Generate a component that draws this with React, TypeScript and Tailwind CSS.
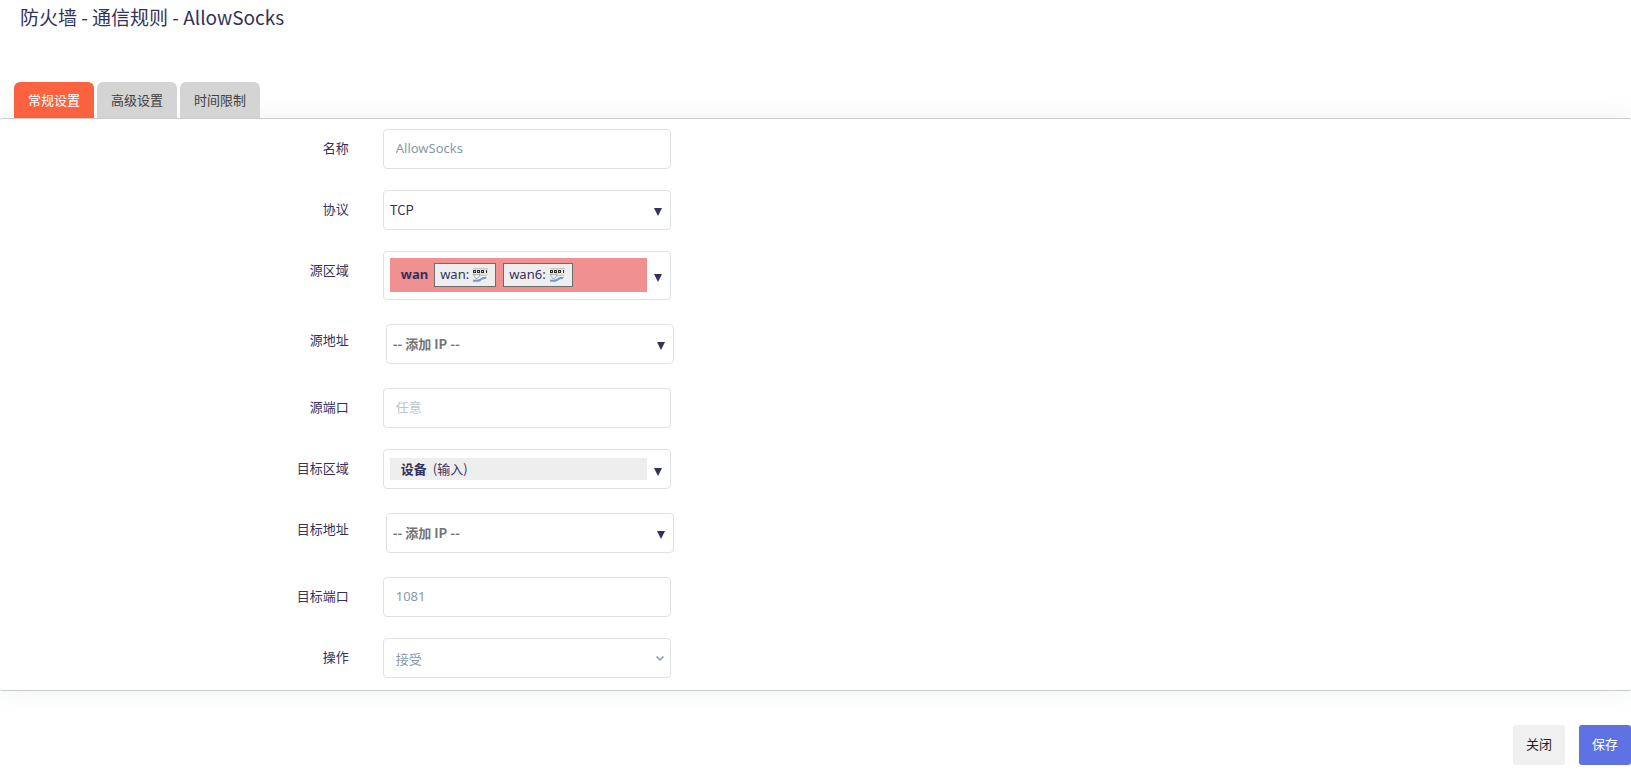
import { FC, ReactNode } from "react";
import classNames from "clsx";

const tabs = ["常规设置", "高级设置", "时间限制"];

const boxStyle = "h-10 w-72 rounded border border-[#dee2e6] bg-white";
const latinFont = "font-['Noto_Sans','Noto_Sans_CJK_SC',sans-serif]";

interface RowProps {
  label: string;
  htmlFor: string;
  nested?: boolean;
  children: ReactNode;
}

const Row: FC<RowProps> = ({ label, htmlFor, nested, children }) => {
  return (
    <div className="flex items-start">
      <label
        htmlFor={htmlFor}
        className="w-[calc(25%-25px)] shrink-0 pt-[9px] pr-[34px] text-right leading-5"
      >
        {label}
      </label>
      <div className={classNames({ "p-[3px]": nested })}>{children}</div>
    </div>
  );
};

interface TextFieldProps {
  id: string;
  value?: string;
  placeholder?: string;
}

const TextField: FC<TextFieldProps> = ({ id, value, placeholder }) => {
  return (
    <input
      id={id}
      type="text"
      defaultValue={value}
      placeholder={placeholder}
      className={classNames(boxStyle, latinFont, "block px-3 pb-[2px] text-[#8898aa] placeholder:text-[#bcc5cf]")}
    />
  );
};

const Arrow: FC = () => {
  return (
    <svg viewBox="0 0 8 8" className="size-2 fill-[#32325d]" aria-hidden="true">
      <path d="M0 0h8L4 8z" />
    </svg>
  );
};

interface DropdownProps {
  id: string;
  option: string;
  muted?: boolean;
}

const Dropdown: FC<DropdownProps> = ({ id, option, muted }) => {
  return (
    <div className="relative">
      <select
        id={id}
        className={classNames(boxStyle, "block appearance-none px-[6px]", {
          "font-bold text-[#737373]": muted,
        })}
      >
        <option>{option}</option>
      </select>
      <span className="pointer-events-none absolute top-[18px] right-[9px]">
        <Arrow />
      </span>
    </div>
  );
};

interface ZoneDropdownProps {
  id: string;
  tall?: boolean;
  children: ReactNode;
}

const ZoneDropdown: FC<ZoneDropdownProps> = ({ id, tall, children }) => {
  return (
    <button
      id={id}
      type="button"
      aria-haspopup="listbox"
      className={classNames("flex w-72 items-center justify-between rounded border border-[#dee2e6] bg-white pr-2 pl-[6px]", {
        "h-[49px] pb-px": tall,
        "h-10": !tall,
      })}
    >
      {children}
      <span className="pt-[5px]">
        <Arrow />
      </span>
    </button>
  );
};

// ethernet switch with a cable
const SwitchIcon: FC = () => {
  return (
    <svg viewBox="0 0 16 16" className="size-4" aria-hidden="true">
      <path d="M1 1h15v7H1z" fill="#e3e3dc" />
      <path d="M1 1.5h15" stroke="#c6c6c2" />
      <path d="M1 3h3v3H1zM5 3h3v3H5zM9 3h3v3H9zM14 3h1v3h-1z" fill="#33332a" />
      <path d="M2 4h1v1H2zM6 4h1v1H6zM10 4h1v1h-1z" fill="#e6d25a" />
      <path d="M8 8.5h7M10 10.5h5" stroke="#c9c9c4" />
      <path d="M1 7l3 1 4-1-1 3-3 2-1-2z" fill="#f8f8f8" stroke="#8f9294" strokeWidth=".7" />
      <path d="M14 11c-4-.5-4 1-6 2-2 1-4 1-7 .5" fill="none" stroke="#6c9bd0" strokeWidth="2" />
    </svg>
  );
};

const IfaceBadge: FC<{ name: string }> = ({ name }) => {
  return (
    <span className="flex h-6 items-center gap-[3px] border border-[#6c6c6c] bg-[#eeeeee] pr-[7px] pl-[5px]">
      {name}:
      <SwitchIcon />
    </span>
  );
};

export default function App() {
  return (
    <main className="overflow-x-hidden bg-white font-['Noto_Sans_CJK_SC',sans-serif] text-[13px] text-[#32325d]">
      <h2 className="px-5 pt-[3px] text-[19px] leading-7">防火墙 - 通信规则 - AllowSocks</h2>

      <nav className="mt-[51px] flex gap-[3px] px-[14px]">
        {tabs.map((tab, index) => (
          <a
            key={tab}
            href="#"
            className={classNames("flex h-9 w-20 items-center justify-center rounded-t-md", {
              "bg-[#fb6340] text-white": index === 0,
              "bg-[#d4d4d4] text-[#404040]": index !== 0,
            })}
          >
            {tab}
          </a>
        ))}
      </nav>

      <form>
        <section className="flex flex-col gap-[21px] rounded-xs border-y border-[#cccccc] bg-white pt-[10px] pb-3 shadow-[0_0_24px_0_rgba(136,152,170,0.15)]">
          <Row label="名称" htmlFor="name">
            <TextField id="name" value="AllowSocks" />
          </Row>
          <Row label="协议" htmlFor="proto">
            <Dropdown id="proto" option="TCP" />
          </Row>
          <Row label="源区域" htmlFor="src">
            <ZoneDropdown id="src" tall>
              <span className={classNames(latinFont, "flex h-[34px] w-[257px] items-center gap-[6px] bg-[#f09090] pl-[11px]")}>
                <strong>wan</strong>
                <span className="flex gap-[7px]">
                  <IfaceBadge name="wan" />
                  <IfaceBadge name="wan6" />
                </span>
              </span>
            </ZoneDropdown>
          </Row>
          <Row label="源地址" htmlFor="src_ip" nested>
            <Dropdown id="src_ip" option="-- 添加 IP --" muted />
          </Row>
          <Row label="源端口" htmlFor="src_port">
            <TextField id="src_port" placeholder="任意" />
          </Row>
          <Row label="目标区域" htmlFor="dest">
            <ZoneDropdown id="dest">
              <span className="flex h-[22px] w-[257px] items-center gap-[6px] bg-[#eeeeee] pl-[11px]">
                <strong>设备</strong>
                <span>(输入)</span>
              </span>
            </ZoneDropdown>
          </Row>
          <Row label="目标地址" htmlFor="dest_ip" nested>
            <Dropdown id="dest_ip" option="-- 添加 IP --" muted />
          </Row>
          <Row label="目标端口" htmlFor="dest_port">
            <TextField id="dest_port" value="1081" />
          </Row>
          <Row label="操作" htmlFor="target">
            <div className="relative">
              <select id="target" className={classNames(boxStyle, "block appearance-none px-3 pt-[2px] text-[#8898aa]")}>
                <option>接受</option>
              </select>
              <svg
                viewBox="0 0 8 6"
                className="pointer-events-none absolute top-[18px] right-[7px] h-[6px] w-2 fill-none stroke-[#8898aa] stroke-[1.5]"
                aria-hidden="true"
              >
                <path d="M.5 .5L4 4L7.5 .5" />
              </svg>
            </div>
          </Row>
        </section>

        <div className="mt-[34px] mb-3 flex justify-end gap-[14px]">
          <button type="button" className="h-10 rounded-[3px] bg-[#f0f0f0] px-[13px] pb-[2px] text-[#212121]">
            关闭
          </button>
          <button type="submit" className="h-10 rounded-[3px] bg-[#5e72e4] px-[13px] pb-[2px] text-white">
            保存
          </button>
        </div>
      </form>
    </main>
  );
}
